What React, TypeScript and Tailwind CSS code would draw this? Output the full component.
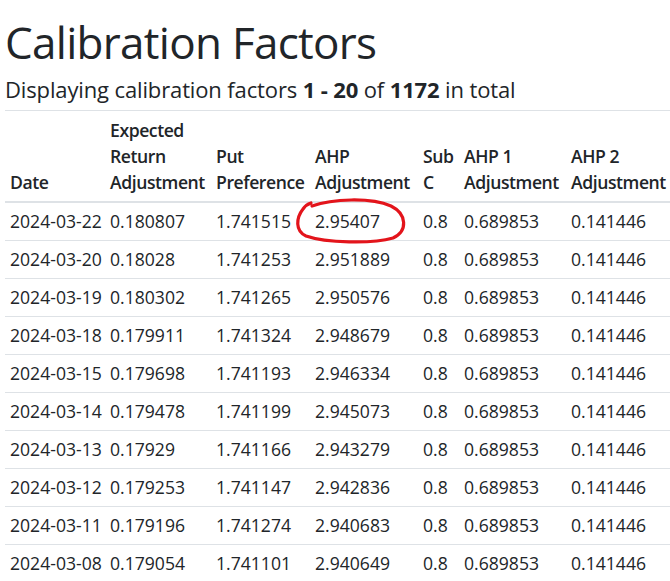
const rows = [
  ["2024-03-22", "0.180807", "1.741515", "2.95407", "0.8", "0.689853", "0.141446"],
  ["2024-03-20", "0.18028", "1.741253", "2.951889", "0.8", "0.689853", "0.141446"],
  ["2024-03-19", "0.180302", "1.741265", "2.950576", "0.8", "0.689853", "0.141446"],
  ["2024-03-18", "0.179911", "1.741324", "2.948679", "0.8", "0.689853", "0.141446"],
  ["2024-03-15", "0.179698", "1.741193", "2.946334", "0.8", "0.689853", "0.141446"],
  ["2024-03-14", "0.179478", "1.741199", "2.945073", "0.8", "0.689853", "0.141446"],
  ["2024-03-13", "0.17929", "1.741166", "2.943279", "0.8", "0.689853", "0.141446"],
  ["2024-03-12", "0.179253", "1.741147", "2.942836", "0.8", "0.689853", "0.141446"],
  ["2024-03-11", "0.179196", "1.741274", "2.940683", "0.8", "0.689853", "0.141446"],
  ["2024-03-08", "0.179054", "1.741101", "2.940649", "0.8", "0.689853", "0.141446"],
];

const headers = [
  "Date",
  "Expected Return Adjustment",
  "Put Preference",
  "AHP Adjustment",
  "Sub C",
  "AHP 1 Adjustment",
  "AHP 2 Adjustment",
];

export default function App() {
  return (
    <div className="relative h-[581px] w-[670px] overflow-hidden bg-white pl-[5px] text-[#212529] font-['Open_Sans','Noto_Sans',sans-serif]">
      <h1 className="pt-[16px] text-[44px] leading-[52.8px] font-normal tracking-[-0.016em] mb-[7px]">Calibration Factors</h1>
      <h5 className="text-[22px] leading-[26.4px] font-normal tracking-[-0.006em] mb-[8px]">
        Displaying calibration factors <b className="font-bold">1&nbsp;-&nbsp;20</b> of <b className="font-bold">1172</b> in total
      </h5>

      <table className="table-fixed border-collapse w-[667px] text-[17.6px] leading-[26.4px]">
        <colgroup>
          <col className="w-[100px]" />
          <col className="w-[106px]" />
          <col className="w-[99px]" />
          <col className="w-[108px]" />
          <col className="w-[41px]" />
          <col className="w-[107px]" />
          <col className="w-[106px]" />
        </colgroup>
        <thead>
          <tr>
            {headers.map((h) => (
              <th
                key={h}
                className="align-bottom text-left font-semibold tracking-[-0.025em] px-[5px] py-[5.3px] border-t border-b-2 border-[#dee2e6]"
              >
                {h}
              </th>
            ))}
          </tr>
        </thead>
        <tbody>
          {rows.map((r) => (
            <tr key={r[0]}>
              {r.map((c, i) => (
                <td key={i} className="px-[5px] py-[5.3px] border-t border-[#dee2e6] whitespace-nowrap">
                  {c}
                </td>
              ))}
            </tr>
          ))}
        </tbody>
      </table>

      <svg className="absolute left-0 top-0 pointer-events-none" width="670" height="581" viewBox="0 0 670 581">
        <path
          d="M 312 206 C 332 199, 370 197, 391 206 C 407 214, 408 231, 393 238 C 372 244, 326 243, 306 236 C 295 231, 296 218, 303 209 C 305 206, 308 204, 311 203"
          fill="none"
          stroke="#e3141b"
          strokeWidth="3.2"
          strokeLinecap="round"
        />
      </svg>
    </div>
  );
}
